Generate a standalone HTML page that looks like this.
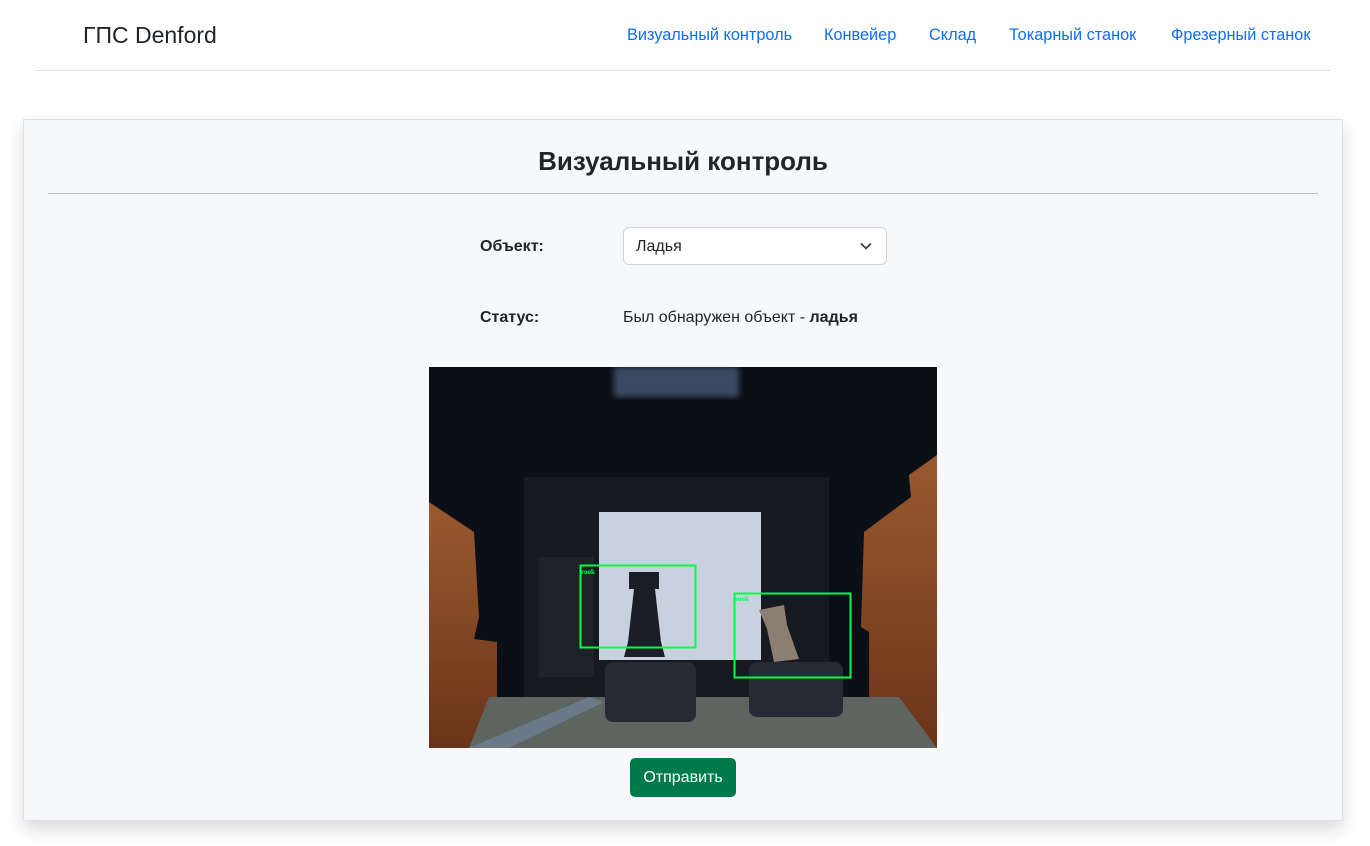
<!DOCTYPE html>
<html><head><meta charset="utf-8"><style>
*{box-sizing:border-box;margin:0;padding:0}
body{width:1370px;height:846px;background:#fff;font-family:"Liberation Sans",Arial,sans-serif;color:#212529;position:relative;overflow:hidden}
.a{position:absolute}
.nav a{position:absolute;top:26px;color:#0d6efd;font-size:16.3px;text-decoration:none;white-space:nowrap}
</style></head><body>
<div class="a" style="left:83px;top:22px;font-size:23px;">ГПС Denford</div>
<div class="nav">
<a style="left:627px">Визуальный контроль</a>
<a style="left:824px">Конвейер</a>
<a style="left:929px">Склад</a>
<a style="left:1009px">Токарный станок</a>
<a style="left:1171px">Фрезерный станок</a>
</div>
<div class="a" style="left:35px;top:70px;width:1296px;height:1px;background:#dee2e6"></div>
<div class="a" style="left:23px;top:119px;width:1320px;height:702px;background:#f7f8fa;border:1px solid #dee2e6;box-shadow:0 8px 16px rgba(0,0,0,.15)"></div>
<div class="a" style="left:23px;top:146px;width:1320px;text-align:center;font-size:26px;font-weight:bold">Визуальный контроль</div>
<div class="a" style="left:48px;top:193px;width:1270px;height:1px;background:#b8babd"></div>
<div class="a" style="left:480px;top:238px;font-size:16px;font-weight:bold">Объект:</div>
<div class="a" style="left:623px;top:227px;width:264px;height:38px;background:#fff;border:1px solid #ced4da;border-radius:6px;font-size:16px;padding:10px 12px">Ладья
<svg class="a" style="right:14px;top:13px" width="12" height="10" viewBox="0 0 12 10"><path d="M1 2.5l5 5 5-5" fill="none" stroke="#343a40" stroke-width="1.6"/></svg></div>
<div class="a" style="left:480px;top:309px;font-size:16px;font-weight:bold">Статус:</div>
<div class="a" style="left:623px;top:309px;font-size:16px">Был обнаружен объект - <b>ладья</b></div>
<svg class="a" style="left:429px;top:367px" width="508" height="381" viewBox="0 0 508 381">
<defs><filter id="b"><feGaussianBlur stdDeviation="3"/></filter>
<linearGradient id="o" x1="0" y1="0" x2="0" y2="1"><stop offset="0" stop-color="#9a5a30"/><stop offset="1" stop-color="#6a3418"/></linearGradient></defs>
<rect width="508" height="381" fill="#0b0f16"/>
<rect x="185" y="0" width="125" height="30" fill="#3a4a62" filter="url(#b)"/>
<polygon points="0,135 45,165 50,250 45,272 68,275 68,381 0,381" fill="url(#o)"/>
<polygon points="508,88 480,108 482,130 435,165 432,260 440,265 440,381 508,381" fill="url(#o)"/>
<rect x="95" y="110" width="305" height="225" fill="#161a20"/>
<rect x="170" y="145" width="162" height="148" fill="#c9d1de"/>
<rect x="110" y="190" width="55" height="120" fill="#1e2226"/>
<polygon points="40,381 60,330 470,330 508,381" fill="#5e6560"/>
<polygon points="40,381 160,330 175,335 80,381" fill="#6b7a88"/>
<rect x="176" y="295" width="91" height="60" rx="8" fill="#262a34"/>
<rect x="320" y="295" width="94" height="55" rx="8" fill="#262a34"/>
<polygon points="200,205 230,205 230,222 226,222 232,275 236,290 195,290 199,275 205,222 200,222" fill="#1b1e26"/>
<polygon points="330,243 355,238 358,258 370,292 345,295 338,262" fill="#8b7e72"/>
<rect x="151.5" y="198.5" width="115" height="82" fill="none" stroke="#00ff44" stroke-width="2"/>
<rect x="305.5" y="226.5" width="116" height="84" fill="none" stroke="#00ff44" stroke-width="2"/>
<text x="152" y="207" font-size="7" font-weight="bold" fill="#00ff44" font-family="Liberation Serif">rook</text>
<text x="306" y="234" font-size="7" font-weight="bold" fill="#00ff44" font-family="Liberation Serif">rook</text>
</svg>
<div class="a" style="left:630px;top:758px;width:106px;height:39px;background:#007a4a;border-radius:5px;color:#fff;font-size:16px;text-align:center;line-height:40px">Отправить</div>
</body></html>
